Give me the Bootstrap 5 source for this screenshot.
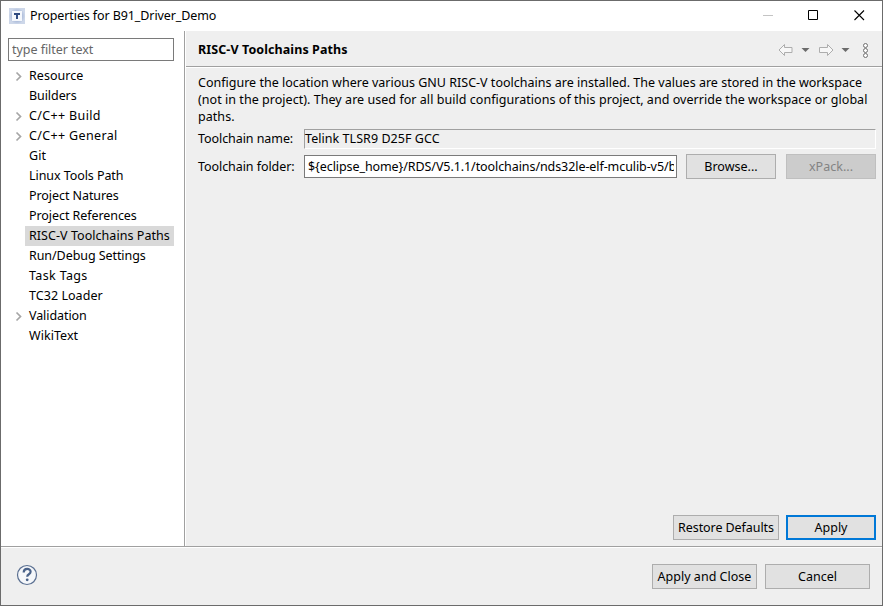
<!DOCTYPE html>
<html lang="en">
<head>
<meta charset="utf-8">
<meta name="viewport" content="width=device-width, initial-scale=1">
<title>Properties for B91_Driver_Demo</title>
<link href="https://cdn.jsdelivr.net/npm/bootstrap@5.3.0/dist/css/bootstrap.min.css" rel="stylesheet">
<style>
body{font-family:"Noto Sans","Noto Sans CJK SC",sans-serif;font-size:12.5px;line-height:17px;color:#000;letter-spacing:.05px}
.dialog{width:883px;height:606px;border:1px solid #6b6b6b;background:#efefef}
.titlebar{height:30px;padding-left:8px}
.app-icon{margin-right:5px}
.t-title{letter-spacing:-.1px;padding-bottom:1px}
.win-set{margin-right:4px}
.win-btn{width:46px;height:30px}
.side{width:184px;border-right:1px solid #a0a0a0;padding-top:7px}
.filter{width:166px;height:23px;margin-left:7px;border:1px solid #7a7a7a;padding:0 3px;color:#000;font-size:12.5px;outline:0;letter-spacing:-.05px}
.filter::placeholder{color:#666;opacity:1}
.tree{margin-top:5px}
.tree li{height:20px;padding-left:11px}
.tree .arrow{width:13px;height:12px;flex:none}
.tree .label{height:20px;line-height:19px;padding:0 4px}
.tree .chosen{background:#d9d9d9}
.loose{letter-spacing:.35px}
.tight{letter-spacing:-.07px}
.main-pane{border-left:1px solid #fff}
.head{height:37px;border-bottom:1px solid #fff;box-shadow:inset 0 -1px #a0a0a0;padding:1px 6px 0 12px;font-size:12.5px;letter-spacing:.09px}
.body-pane{padding:6px 6px 6px 12px}
.intro .l1{letter-spacing:.006px}
.intro .l2{letter-spacing:.042px}
.field-label{width:106px;flex:none;letter-spacing:-.07px}
.name-row{margin-top:4px;height:20px}
.name-row .field-label{line-height:17px;padding-bottom:1px}
.name-box{height:20px;border:1px solid;border-color:#a0a0a0 #fff #fff #a0a0a0}
.folder-row{margin-top:5px}
.folder-box{width:373px;height:23px;border:1px solid #7a7a7a;padding:0 2px 0 3px}
.path-text{letter-spacing:-.08px;padding-bottom:1px}
.key{height:25px;border:1px solid #adadad;border-radius:0;background:#e1e1e1;color:#000;font-size:12.5px;line-height:17px;padding:0;letter-spacing:.02px}
.key:disabled{background:#ccc;border-color:#bfbfbf;color:#838383;opacity:1}
.key.main-key{border:2px solid #0078d7}
.keys{gap:10px}
.page-keys{gap:7px}
.page-keys .w106{letter-spacing:-.08px}
.w90{width:90px}.w105{width:105px}.w106{width:106px}
.foot{height:59px;border-top:1px solid #a0a0a0;box-shadow:inset 0 1px #fff;padding:0 12px 0 15px}
.help{margin-bottom:2px}
</style>
<script src="https://cdn.jsdelivr.net/npm/bootstrap@5.3.0/dist/js/bootstrap.bundle.min.js"></script>
</head>
<body class="overflow-hidden">
<div class="dialog d-flex flex-column">
  <header class="titlebar d-flex align-items-center bg-white">
    <svg class="app-icon" width="16" height="16"><defs><radialGradient id="g"><stop offset=".5" stop-color="#a3b4d6"/><stop offset="1" stop-color="#cdd7e9"/></radialGradient></defs><path fill="url(#g)" d="M0 0h16v16H0z"/><path fill="#f4f7fc" d="M3 3h10v10H3z"/><path fill="#2f4a80" d="M5 5h6v2H9v4H7V7H5z"/></svg>
    <span class="t-title">Properties for B91_Driver_Demo</span>
    <div class="win-set d-flex ms-auto">
      <svg class="win-btn" viewBox="0 0 46 30"><path d="M23 14.500h10" stroke="#c4c4c4"/></svg>
      <svg class="win-btn" viewBox="0 0 46 30"><path d="M22.500 9.500h9v9h-9z" fill="none" stroke="#000"/></svg>
      <svg class="win-btn" viewBox="0 0 46 30"><path d="M22.500 9.500l9.500 9.500M32 9.500l-9.500 9.500" stroke="#000" stroke-width="1.100"/></svg>
    </div>
  </header>
  <div class="d-flex flex-grow-1">
    <aside class="side bg-white flex-shrink-0">
      <input class="filter d-block" type="text" placeholder="type filter text">
      <ul class="tree list-unstyled mb-0">
        <li class="d-flex align-items-center"><svg class="arrow" viewBox="0 0 13 12"><path d="M4.500 2.500l4 4-4 4" fill="none" stroke="#a6a6a6" stroke-width="1.700"/></svg><span class="label">Resource</span></li>
        <li class="d-flex"><span class="arrow"></span><span class="label tight">Builders</span></li>
        <li class="d-flex align-items-center"><svg class="arrow" viewBox="0 0 13 12"><path d="M4.500 2.500l4 4-4 4" fill="none" stroke="#a6a6a6" stroke-width="1.700"/></svg><span class="label loose">C/C++ Build</span></li>
        <li class="d-flex align-items-center"><svg class="arrow" viewBox="0 0 13 12"><path d="M4.500 2.500l4 4-4 4" fill="none" stroke="#a6a6a6" stroke-width="1.700"/></svg><span class="label loose">C/C++ General</span></li>
        <li class="d-flex"><span class="arrow"></span><span class="label">Git</span></li>
        <li class="d-flex"><span class="arrow"></span><span class="label tight">Linux Tools Path</span></li>
        <li class="d-flex"><span class="arrow"></span><span class="label tight">Project Natures</span></li>
        <li class="d-flex"><span class="arrow"></span><span class="label tight">Project References</span></li>
        <li class="d-flex"><span class="arrow"></span><span class="label chosen">RISC-V Toolchains Paths</span></li>
        <li class="d-flex"><span class="arrow"></span><span class="label tight">Run/Debug Settings</span></li>
        <li class="d-flex"><span class="arrow"></span><span class="label loose">Task Tags</span></li>
        <li class="d-flex"><span class="arrow"></span><span class="label">TC32 Loader</span></li>
        <li class="d-flex align-items-center"><svg class="arrow" viewBox="0 0 13 12"><path d="M4.500 2.500l4 4-4 4" fill="none" stroke="#a6a6a6" stroke-width="1.700"/></svg><span class="label tight">Validation</span></li>
        <li class="d-flex"><span class="arrow"></span><span class="label">WikiText</span></li>
      </ul>
    </aside>
    <main class="main-pane d-flex flex-column flex-grow-1">
      <div class="head d-flex align-items-center fw-bold">
        <span>RISC-V Toolchains Paths</span>
        <svg class="ms-auto" width="98" height="18" viewBox="0 0 98 18">
          <g fill="#f7f7f7" stroke="#adadad" stroke-linejoin="round"><path d="M1 9l5.500-5.500v3H14v5H6.500v3z"/><path d="M55 9l-5.500-5.500v3H41.500v5h8v3z"/></g>
          <path d="M23.500 7h8l-4 4zM63.500 7h8l-4 4z" fill="#6b6b6b"/>
          <g fill="#fff" stroke="#707070"><circle cx="87.500" cy="4.500" r="2"/><circle cx="87.500" cy="9.500" r="2"/><circle cx="87.500" cy="14.500" r="2"/></g>
        </svg>
      </div>
      <div class="body-pane d-flex flex-column flex-grow-1">
        <div class="intro text-nowrap"><div class="l1">Configure the location where various GNU RISC-V toolchains are installed. The values are stored in the workspace</div><div class="l2">(not in the project). They are used for all build configurations of this project, and override the workspace or global</div><div>paths.</div></div>
        <div class="name-row d-flex align-items-center"><span class="field-label">Toolchain name:</span><div class="name-box flex-grow-1">Telink TLSR9 D25F GCC</div></div>
        <div class="folder-row d-flex align-items-center"><span class="field-label">Toolchain folder:</span>
          <div class="folder-box bg-white d-flex align-items-center"><span class="path-text overflow-hidden text-nowrap">${eclipse_home}/RDS/V5.1.1/toolchains/nds32le-elf-mculib-v5/bin</span></div>
          <div class="keys d-flex ms-auto"><button class="btn key w90">Browse...</button><button class="btn key w90" disabled>xPack...</button></div>
        </div>
        <div class="page-keys d-flex justify-content-end mt-auto"><button class="btn key w106">Restore Defaults</button><button class="btn key w90 main-key">Apply</button></div>
      </div>
    </main>
  </div>
  <footer class="foot d-flex align-items-center">
    <svg class="help" width="22" height="22" viewBox="0 0 22 22"><circle cx="11" cy="11" r="9.500" fill="#f5f7fa" stroke="#5a6f91" stroke-width="1.200"/><path d="M7.700 8.500c0-4.700 6.900-4.500 6.900-.7 0 2.600-3.400 2.300-3.400 5" fill="none" stroke="#4a6289" stroke-width="2.200"/><circle cx="11.200" cy="15.800" r="1.400" fill="#4a6289"/></svg>
    <div class="ms-auto d-flex gap-2"><button class="btn key w105">Apply and Close</button><button class="btn key w105">Cancel</button></div>
  </footer>
</div>
</body>
</html>
